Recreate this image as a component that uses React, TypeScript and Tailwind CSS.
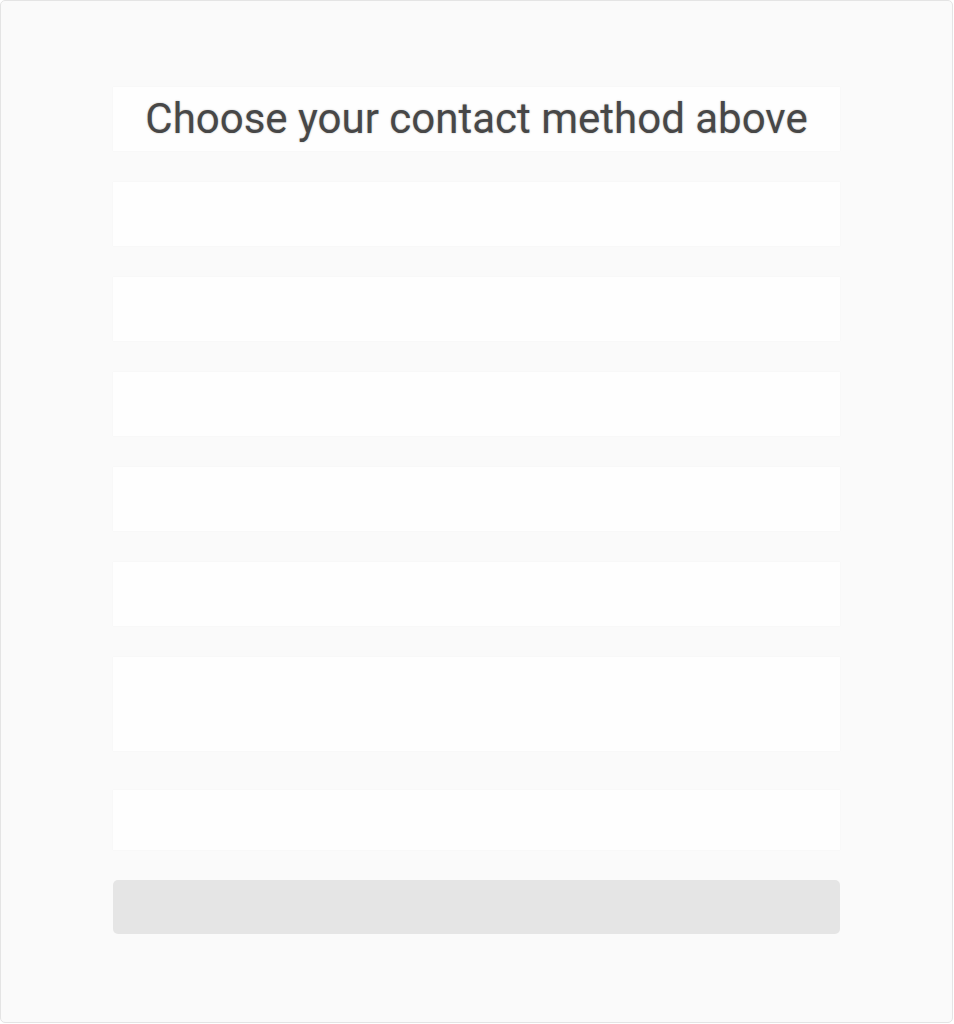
export default function App() {
  const rows = [0, 1, 2, 3, 4];

  return (
    <div className="h-[1024px] w-[954px] bg-white">
      <div className="flex h-[1023px] w-[953px] flex-col rounded-[5px] border border-[#e4e4e4] bg-[#fafafa] px-[112px] pt-[86px]">
        <div className="flex h-[64px] items-center justify-center bg-[#fefefe] shadow-[0_0_1px_rgba(0,0,0,0.06)]">
          <h1
            className="text-[42px] leading-none text-[#474747] [text-shadow:0_0_2px_rgba(0,0,0,0.3)]"
            style={{ fontFamily: "Roboto, 'Noto Sans', sans-serif" }}
          >
            Choose your contact method above
          </h1>
        </div>

        <div className="mt-[31px] flex flex-col gap-[31px]">
          {rows.map((r) => (
            <div
              key={r}
              className="h-[64px] bg-[#fefefe] shadow-[0_0_1px_rgba(0,0,0,0.06)]"
            />
          ))}
          <div className="h-[94px] bg-[#fefefe] shadow-[0_0_1px_rgba(0,0,0,0.06)]" />
        </div>

        <div className="mt-[39px] h-[60px] bg-[#fefefe] shadow-[0_0_1px_rgba(0,0,0,0.06)]" />

        <div className="mt-[30px] h-[54px] rounded-[5px] bg-[#e5e5e5]" />
      </div>
    </div>
  );
}
